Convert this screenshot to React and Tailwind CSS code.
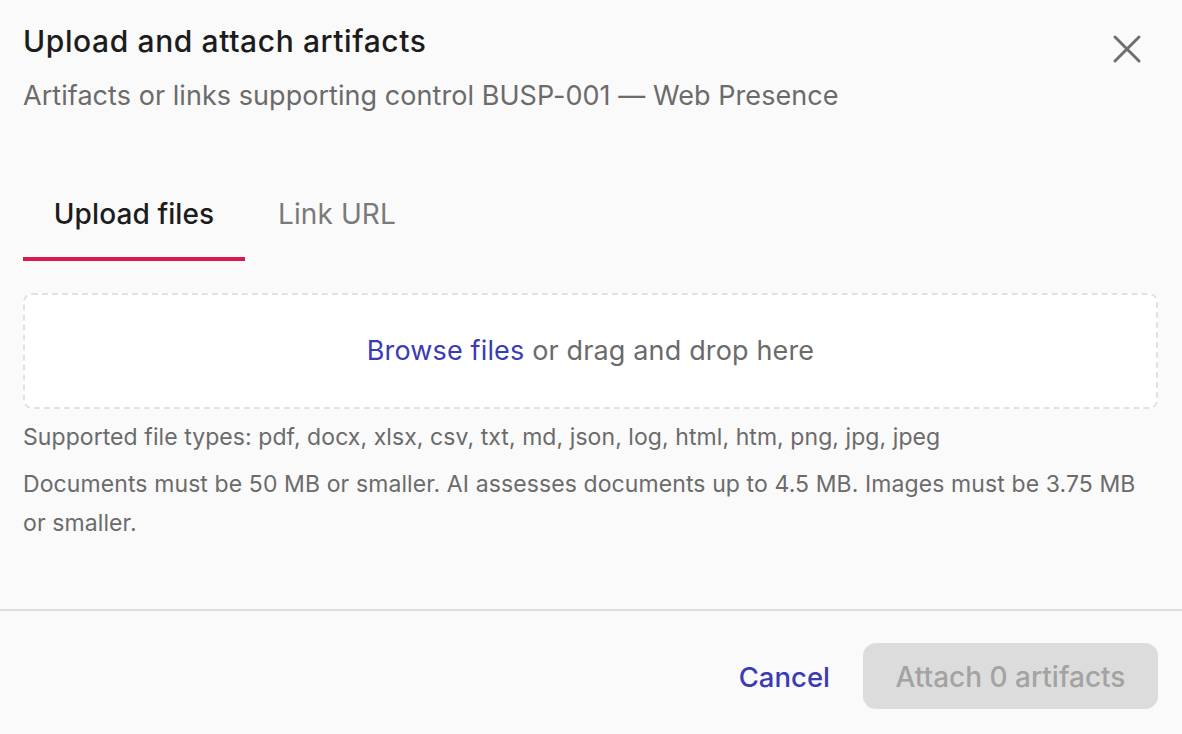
import React from "react";

export default function App() {
  return (
    <div className="w-[1182px] h-[734px] bg-[#fafafa] flex flex-col overflow-hidden" style={{ fontFamily: "Inter, 'Noto Sans', sans-serif" }}>
      <div className="flex-1 flex flex-col px-[23px]">
        <div className="flex items-start justify-between pt-[22px]">
          <div className="flex flex-col">
            <h1 className="text-[30px] leading-[38px] font-medium text-[#1c1c1c] tracking-[0.6px]">Upload and attach artifacts</h1>
            <p className="mt-[18px] text-[27px] leading-[36px] text-[#6b6b6b] tracking-[0.05px]">Artifacts or links supporting control BUSP-001 — Web Presence</p>
          </div>
          <button className="mt-[12px] mr-[17px] w-[30px] h-[30px] flex items-center justify-center text-[#6f6f6f]">
            <svg width="30" height="30" viewBox="0 0 30 30" fill="none" stroke="currentColor" strokeWidth="3" strokeLinecap="round">
              <path d="M3 3 L27 27 M27 3 L3 27" />
            </svg>
          </button>
        </div>

        <div className="mt-[82px] flex">
          <div className="w-[222px] flex flex-col items-center">
            <span className="text-[28px] leading-[36px] font-medium text-[#1c1c1c] tracking-[0.1px]">Upload files</span>
            <div className="mt-[25px] h-[4px] w-full bg-[#d81b4e]" />
          </div>
          <div className="px-[33px] flex flex-col">
            <span className="text-[28px] leading-[36px] text-[#7a7a7a] tracking-[0.1px]">Link URL</span>
          </div>
        </div>

        <div className="mt-[32px] h-[116px] w-[1135px] rounded-[9px] border-2 border-dashed border-[#e2e2e2] bg-white flex items-center justify-center">
          <span className="text-[27px] leading-[36px] text-[#6b6b6b] tracking-[0.15px]">
            <span className="text-[#3a3bb5]">Browse files</span> or drag and drop here
          </span>
        </div>

        <p className="mt-[13px] text-[23px] leading-[30px] text-[#6b6b6b] tracking-[0.07px]">Supported file types: pdf, docx, xlsx, csv, txt, md, json, log, html, htm, png, jpg, jpeg</p>
        <p className="mt-[13px] w-[1140px] text-[23px] leading-[39px] text-[#6b6b6b] tracking-[0.1px]">Documents must be 50 MB or smaller. AI assesses documents up to 4.5 MB. Images must be 3.75 MB or smaller.</p>
      </div>

      <div className="h-[2px] bg-[#dedede]" />

      <div className="h-[123px] flex items-start justify-end px-[24px] pt-[32px]">
        <div className="flex items-start gap-[33px]">
          <button className="h-[66px] pt-[2px] text-[27.5px] leading-[64px] font-medium text-[#3a3bb5]">Cancel</button>
          <button className="h-[66px] w-[295px] pt-[2px] rounded-[13px] bg-[#dcdcdc] text-[28px] font-medium text-[#a3a3a3]">Attach 0 artifacts</button>
        </div>
      </div>
    </div>
  );
}
